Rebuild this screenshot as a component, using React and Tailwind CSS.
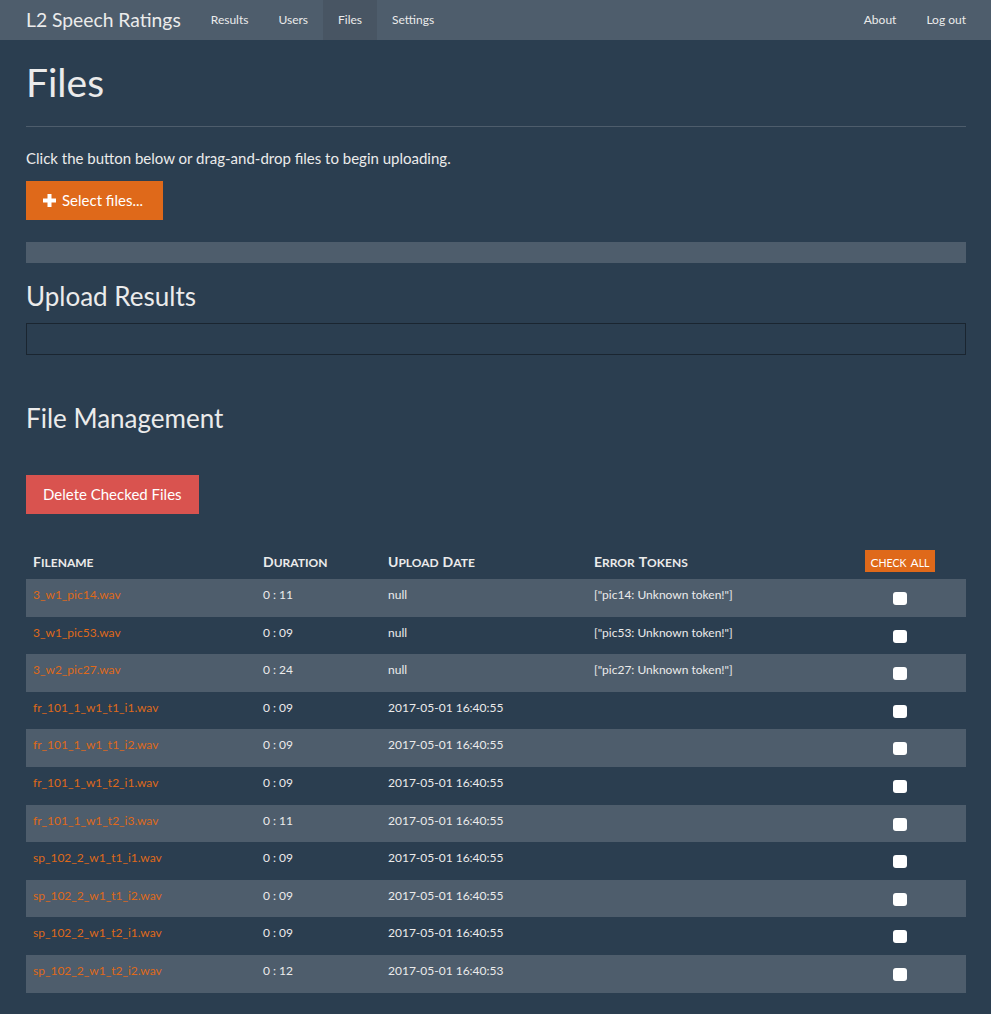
import React from 'react';

const files = [
  ['3_w1_pic14.wav', '0 : 11', 'null', '["pic14: Unknown token!"]'],
  ['3_w1_pic53.wav', '0 : 09', 'null', '["pic53: Unknown token!"]'],
  ['3_w2_pic27.wav', '0 : 24', 'null', '["pic27: Unknown token!"]'],
  ['fr_101_1_w1_t1_i1.wav', '0 : 09', '2017-05-01 16:40:55', ''],
  ['fr_101_1_w1_t1_i2.wav', '0 : 09', '2017-05-01 16:40:55', ''],
  ['fr_101_1_w1_t2_i1.wav', '0 : 09', '2017-05-01 16:40:55', ''],
  ['fr_101_1_w1_t2_i3.wav', '0 : 11', '2017-05-01 16:40:55', ''],
  ['sp_102_2_w1_t1_i1.wav', '0 : 09', '2017-05-01 16:40:55', ''],
  ['sp_102_2_w1_t1_i2.wav', '0 : 09', '2017-05-01 16:40:55', ''],
  ['sp_102_2_w1_t2_i1.wav', '0 : 09', '2017-05-01 16:40:55', ''],
  ['sp_102_2_w1_t2_i2.wav', '0 : 12', '2017-05-01 16:40:53', ''],
];

const cols = 'grid grid-cols-[230px_125px_206px_247px_132px]';

// small caps: big initial letter, the rest uppercase at a smaller size
const Caps = ({ text, big, small }) => (
  <span className="uppercase">
    {text.split(' ').map((w, i) => (
      <React.Fragment key={i}>
        {i > 0 && ' '}
        <span className={big}>{w[0]}</span>
        <span className={small}>{w.slice(1)}</span>
      </React.Fragment>
    ))}
  </span>
);

const NavLink = ({ children, active }) => (
  <a
    href="#"
    className={`flex items-center h-10 px-[15px] text-[12px] text-[#ebebeb] ${active ? 'bg-[#485563]' : ''}`}
  >
    {children}
  </a>
);

const App = () => {
  return (
    <div className="min-h-screen bg-[#2b3e50] text-[#ebebeb] [font-family:Lato,sans-serif]">
      <nav className="bg-[#4e5d6c] h-10">
        <div className="ml-[26px] w-[940px] flex h-10">
          <a href="#" className="flex items-center pr-[15px] text-[19.3px] text-[#ebebeb]">
            L2 Speech Ratings
          </a>
          <NavLink>Results</NavLink>
          <NavLink>Users</NavLink>
          <NavLink active>Files</NavLink>
          <NavLink>Settings</NavLink>
          <div className="ml-auto -mr-[15px] flex">
            <NavLink>About</NavLink>
            <NavLink>Log out</NavLink>
          </div>
        </div>
      </nav>

      <main className="ml-[26px] w-[940px] flex flex-col pb-5">
        <div className="mt-[21px] pb-[22px] border-b border-[#4e5d6c]">
          <h1 className="text-[39px] leading-[1.1]">Files</h1>
        </div>

        <p className="mt-[20px] text-[15px] leading-[1.5]">
          Click the button below or drag-and-drop files to begin uploading.
        </p>

        <div className="mt-[11.5px]">
          <button className="h-[39px] pl-[17px] pr-[20px] bg-[#df691a] text-white text-[15px] flex items-center gap-[6px]">
            <svg width="13" height="13" viewBox="0 0 13 13" fill="white">
              <rect x="4.5" y="0" width="4" height="13" />
              <rect x="0" y="4.5" width="13" height="4" />
            </svg>
            Select files...
          </button>
        </div>

        <div className="mt-[22px] h-[21px] bg-[#4e5d6c]" />

        <h2 className="mt-[19.5px] text-[26px] leading-[1.1]">Upload Results</h2>
        <div className="mt-[12px] h-[32px] border border-[#1a2530]" />

        <h2 className="mt-[49.5px] text-[26px] leading-[1.1]">File Management</h2>

        <div className="mt-[42px]">
          <button className="h-[39px] px-[17px] bg-[#d9534f] text-white text-[15px]">
            Delete Checked Files
          </button>
        </div>

        <div className="mt-[28px]">
          <div className={`${cols} h-[37px] items-center font-bold`}>
            <div className="pl-[7px]">
              <Caps text="Filename" big="text-[14px]" small="text-[12px]" />
            </div>
            <div className="pl-[7px]">
              <Caps text="Duration" big="text-[14px]" small="text-[12px]" />
            </div>
            <div className="pl-[7px]">
              <Caps text="Upload Date" big="text-[14px]" small="text-[12px]" />
            </div>
            <div className="pl-[7px]">
              <Caps text="Error Tokens" big="text-[14px]" small="text-[12px]" />
            </div>
            <div className="flex justify-center">
              <button className="h-[22px] px-[6px] bg-[#df691a] text-white font-normal leading-none">
                <Caps text="Check All" big="text-[12px]" small="text-[10.5px]" />
              </button>
            </div>
          </div>
          {files.map(([name, dur, date, err], i) => (
            <div
              key={name}
              className={`${cols} h-[37.6px] text-[12px] leading-[17px] ${i % 2 === 0 ? 'bg-[#4e5d6c]' : ''}`}
            >
              <div className="pl-[7px] pt-[7px]">
                <a href="#" className="text-[#df691a]">{name}</a>
              </div>
              <div className="pl-[7px] pt-[7px]">{dur}</div>
              <div className="pl-[7px] pt-[7px]">{date}</div>
              <div className="pl-[7px] pt-[7px]">{err}</div>
              <div className="flex justify-center pt-[13px]">
                <input
                  type="checkbox"
                  className="appearance-none w-[14px] h-[13px] bg-white rounded-[3px]"
                />
              </div>
            </div>
          ))}
        </div>
      </main>
    </div>
  );
};

export default App;
